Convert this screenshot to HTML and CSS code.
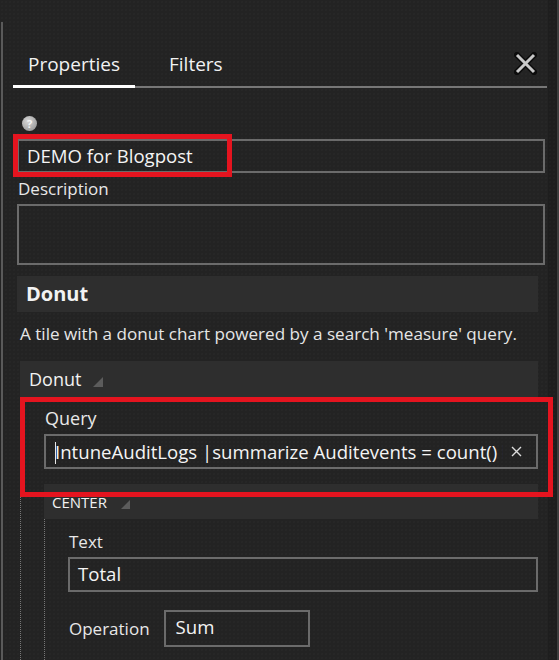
FILE: index.html
```html
<!DOCTYPE html>
<html lang="en">
<head>
  <meta charset="UTF-8">
  <meta name="viewport" content="width=device-width, initial-scale=1.0">
  <title>Tile Properties</title>
  <link rel="stylesheet" href="styles.css">
</head>
<body>
  <div class="pane">
    <div class="tabs">
      <div class="tab active">Properties</div>
      <div class="tab">Filters</div>
      <button class="close" aria-label="Close">
        <svg width="23" height="23" viewBox="0 0 23 23">
          <path d="M3 3 L20 20 M20 3 L3 20" stroke="#0c0c0c" stroke-width="6" stroke-linecap="square"/>
          <path d="M3 3 L20 20 M20 3 L3 20" stroke="#c8c8c8" stroke-width="3" stroke-linecap="butt"/>
        </svg>
      </button>
    </div>

    <div class="form">
      <div class="help">?</div>
      <div class="marked">
        <div class="input">DEMO for Blogpost</div>
        <div class="mark title-mark"></div>
      </div>

      <div class="label">Description</div>
      <div class="input textarea"></div>

      <div class="section-head">Donut</div>
      <p class="section-desc">A tile with a donut chart powered by a search 'measure' query.</p>

      <div class="group">
        <div class="group-head">Donut
          <svg class="grip" width="10" height="10" viewBox="0 0 10 10">
            <polygon points="10,0 10,10 0,10" fill="#5c5c5c"/>
          </svg>
        </div>
        <div class="group-body">
          <div class="query marked">
            <div class="label big">Query</div>
            <div class="input search">
              <span class="search-text"><span class="caret"></span>IntuneAuditLogs |summarize Auditevents = count() by OperationName</span>
              <svg class="clear" width="11" height="11" viewBox="0 0 11 11">
                <path d="M1 1 L10 10 M10 1 L1 10" stroke="#dcdcdc" stroke-width="1.4"/>
              </svg>
            </div>
            <div class="mark query-mark"></div>
          </div>

          <div class="subgroup">
            <div class="group-head small">CENTER
              <svg class="grip" width="9" height="9" viewBox="0 0 10 10">
                <polygon points="10,0 10,10 0,10" fill="#5c5c5c"/>
              </svg>
            </div>
            <div class="subgroup-body">
              <div class="label">Text</div>
              <div class="input">Total</div>
              <div class="row">
                <div class="label">Operation</div>
                <div class="input short">Sum</div>
              </div>
            </div>
          </div>
        </div>
      </div>
    </div>
  </div>
  <div class="gutter"></div>
</body>
</html>
```

FILE: styles.css
```css
body {
  margin: 0;
  height: 660px;
  overflow: hidden;
  display: flex;
  font-family: 'Open Sans', 'Noto Sans', sans-serif;
  color: #f2f2f2;
  background-color: #232323;
  background-image: radial-gradient(#2a2a2a 0.6px, transparent 0.8px);
  background-size: 4px 4px;
}
.pane {
  flex: 1;
  min-width: 0;
  margin-left: 1px;
  margin-top: 22px;
  border-left: 2px solid #5a5a5a;
}
.gutter {
  width: 9px;
  flex-shrink: 0;
  background-color: rgba(0, 0, 0, 0.12);
  border-right: 2px solid #3d3d3d;
}

/* tabs */
.tabs {
  display: flex;
  margin: 28px 1px 0 10px;
  border-bottom: 2px solid #777;
}
.tab {
  font-size: 19px;
  line-height: 28px;
  padding: 0 15px 7px;
  margin-bottom: -2px;
  border-bottom: 3px solid transparent;
  margin-right: 19px;
}
.tab.active {
  border-bottom-color: #fff;
}
.close {
  margin-left: auto;
  margin-right: 10px;
  margin-top: 2px;
  align-self: flex-start;
  background: none;
  border: none;
  padding: 0;
  display: flex;
  cursor: pointer;
}

/* form */
.form {
  padding: 28px 3px 0 14px;
}
.help {
  width: 15px;
  height: 15px;
  margin-left: 5px;
  margin-bottom: 8px;
  border-radius: 50%;
  background: radial-gradient(circle at 40% 35%, #d8d8d8, #8a8a8a);
  color: #f4f4f4;
  font-size: 11px;
  font-weight: 700;
  line-height: 15px;
  text-align: center;
}
.marked {
  position: relative;
}
.mark {
  position: absolute;
  border: 5px solid #e5141f;
  box-sizing: border-box;
}
.title-mark {
  left: -4px;
  top: -5px;
  width: 219px;
  height: 43px;
}
.input {
  border: 2px solid #6b6b6b;
  height: 34px;
  box-sizing: border-box;
  padding: 0 8px;
  font-size: 18.6px;
  line-height: 30px;
  color: #f4f4f4;
  white-space: nowrap;
  overflow: hidden;
}
.textarea {
  height: 61px;
}
.label {
  font-size: 17px;
  line-height: 22px;
  color: #e8e8e8;
  margin: 5px 0 4px 1px;
}
.label.big {
  font-size: 18px;
  line-height: 24px;
  margin: 0 0 4px 1px;
}

/* donut section */
.section-head {
  margin: 11px 7px 0 0;
  height: 36px;
  padding-left: 9px;
  background-color: #2e2e2e;
  font-size: 20px;
  font-weight: 700;
  line-height: 36px;
}
.section-desc {
  margin: 10px 0 15px 3px;
  font-size: 17.1px;
  line-height: 24px;
  color: #e6e6e6;
  white-space: nowrap;
}
.group {
  margin: 0 7px 0 3px;
}
.group-head {
  height: 36px;
  padding-left: 9px;
  background-color: #2e2e2e;
  font-size: 18px;
  line-height: 36px;
  display: flex;
  align-items: center;
}
.group-head.small {
  height: 35px;
  font-size: 15px;
  padding-left: 8px;
}
.grip {
  margin-left: 12px;
  margin-top: 6px;
}
.small .grip {
  margin-left: 14px;
}
.group-body {
  border-left: 1px dotted #777;
  padding-left: 23px;
}
.query {
  padding-top: 9px;
  margin-bottom: 15px;
}
.query-mark {
  left: -24px;
  top: 0;
  width: 533px;
  height: 100px;
}
.search {
  display: flex;
  align-items: center;
  height: 35px;
  padding: 0 14px 0 9px;
}
.search-text {
  flex: 1;
  min-width: 0;
  overflow: hidden;
  position: relative;
}
.caret {
  position: absolute;
  left: 0;
  top: 5px;
  height: 22px;
  border-left: 1.5px solid #e8e8e8;
}
.clear {
  flex-shrink: 0;
  margin-left: 8px;
}
.subgroup-body {
  border-left: 1px dotted #777;
  padding: 7px 0 0 23px;
  height: 200px;
}
.subgroup-body .input {
  height: 35px;
}
.row {
  display: flex;
  align-items: center;
  margin-top: 18px;
}
.row .label {
  margin: 0 14px 0 1px;
}
.input.short {
  width: 146px;
  height: 37px;
  padding-left: 10px;
}
```
